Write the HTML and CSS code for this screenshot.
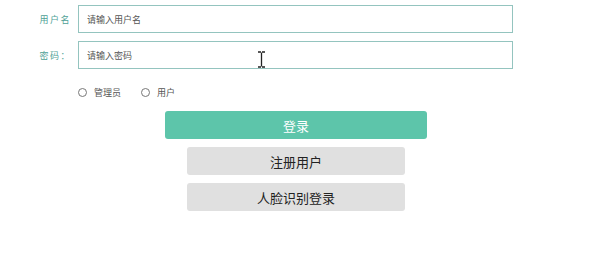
FILE: index.html
```html
<!DOCTYPE html>
<html lang="zh-CN">

<head>
    <meta charset="UTF-8">
    <meta name="viewport" content="width=device-width, initial-scale=1.0">
    <title>登录</title>
    <link rel="stylesheet" href="styles.css">
</head>

<body>
    <div class="login">
        <div class="row">
            <label class="label" for="user">用户名</label>
            <input id="user" class="field" type="text" placeholder="请输入用户名">
        </div>
        <div class="row">
            <label class="label" for="pwd">密码：</label>
            <input id="pwd" class="field" type="password" placeholder="请输入密码">
        </div>
        <div class="roles">
            <label class="role"><span class="dot"></span>管理员</label>
            <label class="role"><span class="dot"></span>用户</label>
        </div>
        <div class="actions">
            <a class="button primary">登录</a>
            <a class="button grey">注册用户</a>
            <a class="button grey">人脸识别登录</a>
        </div>
    </div>
    <svg class="cursor" width="9" height="17" viewBox="0 0 9 17">
        <path d="M1 1h3M5 1h3M4.5 1.5v14M1 16h3M5 16h3" stroke="#222" stroke-width="1.3" fill="none"/>
    </svg>
</body>

</html>
```

FILE: styles.css
```css
body {
    margin: 0;
    background: #fff;
    font-family: "Noto Sans CJK SC", "Liberation Sans", sans-serif;
}

.login {
    padding: 5px 0 0 0;
}

.row {
    display: flex;
    align-items: center;
    margin-bottom: 8px;
}

.label {
    width: 78px;
    padding-right: 7px;
    box-sizing: border-box;
    text-align: right;
    font-size: 9px;
    letter-spacing: 1.5px;
    color: #4f9f96;
}

.field {
    width: 435px;
    height: 28px;
    box-sizing: border-box;
    margin: 0;
    padding: 0 8px;
    border: 1px solid #94c4bf;
    outline: none;
    font-family: inherit;
    font-size: 9px;
    color: #444;
}

.field::placeholder {
    color: #555;
}

.roles {
    display: flex;
    align-items: center;
    gap: 20px;
    padding-left: 78px;
    margin-top: 16px;
    height: 14px;
}

.role {
    display: flex;
    align-items: center;
    font-size: 9px;
    color: #555;
}

.dot {
    width: 7px;
    height: 7px;
    border: 1px solid #777;
    border-radius: 50%;
    margin-right: 7px;
}

.actions {
    display: flex;
    flex-direction: column;
    align-items: flex-start;
    gap: 8px;
    margin-top: 12px;
}

.button {
    display: flex;
    align-items: center;
    justify-content: center;
    height: 28px;
    border-radius: 3px;
    font-size: 13px;
    cursor: pointer;
}

.primary {
    width: 262px;
    margin-left: 165px;
    background-color: #5dc5aa;
    color: #fff;
}

.grey {
    width: 218px;
    margin-left: 187px;
    background-color: #e0e0e0;
    color: #222;
}

.cursor {
    position: absolute;
    left: 257px;
    top: 51px;
}
```
